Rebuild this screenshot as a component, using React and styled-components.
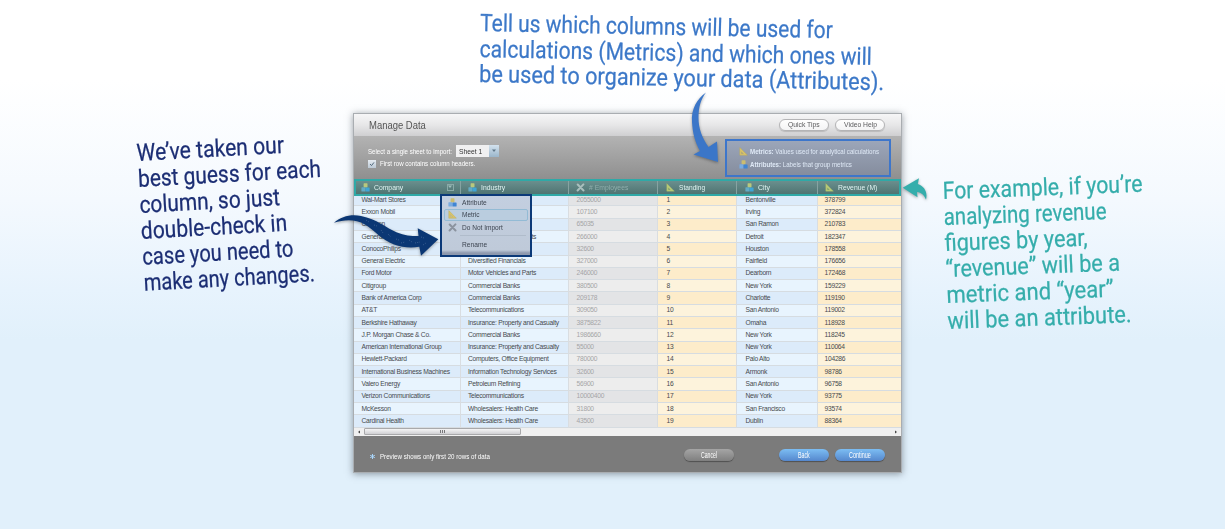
import React, { useLayoutEffect, useRef } from "react";
import styled, { createGlobalStyle } from "styled-components";

const GlobalStyle = createGlobalStyle`
  body {
    margin: 0;
    background: #e2f1fb;
    font-family: "Liberation Sans", Arial, sans-serif;
  }
  * { box-sizing: border-box; }
`;

const Page = styled.main`
  position: relative;
  width: 1225px;
  height: 529px;
  overflow: hidden;
  padding: 113px 0 0 353px;
  background: linear-gradient(#fff 0, #fff 80px, #f4f9fe 200px, #e7f3fd 290px, #e1f0fb 340px, #e1f0fb 100%);
`;

/* ---------- text squeezed to a given width ---------- */

const FitBox = styled.span`
  display: inline-block;
  flex: none;
  width: ${(p) => p.$w}px;
  white-space: pre;
`;
const FitText = styled.span`
  display: inline-block;
  transform-origin: 0 50%;
`;
function Fit({ w, children }) {
  const ref = useRef(null);
  useLayoutEffect(() => {
    const el = ref.current;
    el.style.transform = `scaleX(${w / el.offsetWidth})`;
  }, [w, children]);
  return (
    <FitBox $w={w}>
      <FitText ref={ref}>{children}</FitText>
    </FitBox>
  );
}

/* ---------- dialog ---------- */

const Dialog = styled.section`
  display: flex;
  flex-direction: column;
  width: 549px;
  height: 360px;
  border: 1px solid #a9adb1;
  background: #7b7b7b;
  box-shadow: 0 1px 7px rgba(50, 60, 70, 0.5);
`;
const TitleBar = styled.header`
  display: flex;
  align-items: center;
  gap: 6px;
  height: 22px;
  padding: 0 16px 0 14.5px;
  color: #555;
  font-size: 10.8px;
  background: linear-gradient(#f6f6f7, #e7e7e8 50%, #cfcfd1);
`;
const Spacer = styled.div`
  flex: 1;
`;
const PillButton = styled.button`
  display: flex;
  align-items: center;
  justify-content: center;
  width: 50px;
  height: 12px;
  padding: 0;
  border: 1px solid ${(p) => (p.$tone === "light" ? "#b4b4b6" : "transparent")};
  border-radius: 6px;
  font: ${(p) => (p.$tone === "light" ? '7.2px "Liberation Sans", sans-serif' : '8.4px "Liberation Sans", sans-serif')};
  color: ${(p) => (p.$tone === "light" ? "#5a5a5c" : "#fff")};
  background: ${(p) =>
    ({
      light: "linear-gradient(#fff, #f3f3f4)",
      grey: "linear-gradient(#a5a5a5, #7f7f7f)",
      blue: "linear-gradient(#7cbdf3, #5587cd)",
    })[p.$tone]};
  background-clip: border-box;
  background-origin: border-box;
  box-shadow: 0 1px 1px rgba(0, 0, 0, ${(p) => (p.$tone === "light" ? 0.15 : 0.35)});
`;
const Toolbar = styled.div`
  display: flex;
  justify-content: space-between;
  height: 43px;
  padding: 3px 10px 0 13.5px;
  background: linear-gradient(#b3b3b3, #8f8f8f);
`;
const Options = styled.div`
  display: flex;
  flex-direction: column;
  padding-top: 6px;
  color: #fff;
  font-size: 6.8px;
`;
const Option = styled.label`
  display: flex;
  align-items: center;
  gap: ${(p) => p.$gap}px;
  height: 12.5px;
`;
const Select = styled.div`
  display: flex;
  align-items: center;
  justify-content: space-between;
  width: 43px;
  height: 12px;
  padding-left: 3px;
  color: #333;
  font-size: 7.6px;
  background: #f0f0f1;
`;
const SelectArrow = styled.span`
  display: grid;
  place-items: center;
  width: 10px;
  height: 12px;
  background: linear-gradient(#d3e2ee, #9bb6cb);
`;
const CheckBox = styled.span`
  display: grid;
  place-items: center;
  width: 8px;
  height: 8px;
  background: linear-gradient(#e5ebf1, #bcc9d5);
`;
const Legend = styled.div`
  display: flex;
  flex-direction: column;
  justify-content: center;
  gap: 3px;
  width: 166px;
  height: 38px;
  padding: 0 0 0 12px;
  border: 2px solid #3d76cb;
  background: linear-gradient(#9ca6b9, #858d9e);
  color: #dfe9f6;
  font-size: 6.7px;
`;
const LegendRow = styled.div`
  display: flex;
  align-items: center;
  gap: 2px;
  height: 9.5px;
`;

const columns = "105.5px 108px 89px 79px 81px 84.5px";
const HeaderRow = styled.div`
  display: grid;
  grid-template-columns: 103.5px 108px 89px 79px 81px 82.5px;
  height: 17px;
  border: 2px solid #2fa9a7;
  background: linear-gradient(#6a8f8e, #4f7472);
`;
const HeaderCell = styled.div`
  display: flex;
  align-items: center;
  gap: 4px;
  padding-left: ${(p) => p.$pad}px;
  border-left: ${(p) => (p.$first ? "0" : "1px solid #86a3a2")};
  color: ${(p) => (p.$dim ? "#8fadab" : "#e0f3f1")};
  font-size: 7.5px;
`;
const Dropdown = styled.span`
  display: grid;
  place-items: center;
  width: 7px;
  height: 7px;
  margin-left: auto;
  margin-right: 6px;
  border: 1px solid #8aaaa8;
`;
const Body = styled.div`
  height: 233px;
  display: flex;
  flex-direction: column;
  justify-content: flex-end;
  overflow: hidden;
`;
const Row = styled.div`
  display: grid;
  grid-template-columns: ${columns};
  flex: none;
  height: 12.31px;
`;
const tones = {
  a: ["#dcebfa", "#e8f4fe"],
  n: ["#e3e4e6", "#ededed"],
  m: ["#fdecca", "#fdf3dc"],
};
const Cell = styled.div`
  padding: 0.6px 0 0 ${(p) => p.$pad}px;
  border-bottom: 1px solid #d6dce1;
  border-left: ${(p) => (p.$first ? "0" : "1px solid #d9dde1")};
  background: ${(p) => tones[p.$kind][p.$odd]};
  color: ${(p) => (p.$kind === "n" ? "#a5a5a6" : "#474a4e")};
  font-size: 6.7px;
  letter-spacing: -0.26px;
  line-height: 10.6px;
  white-space: nowrap;
`;
const ScrollTrack = styled.div`
  display: flex;
  align-items: center;
  justify-content: space-between;
  height: 8.5px;
  padding: 0 3px;
  background: #f0f0f0;
`;
const ScrollThumb = styled.div`
  display: flex;
  align-items: center;
  justify-content: center;
  gap: 1px;
  width: 157px;
  height: 7px;
  margin: 0 auto 0 3px;
  border: 1px solid #a9a9ab;
  border-radius: 1px;
  background: linear-gradient(#f4f4f5, #d0d0d3);
`;
const Grip = styled.i`
  width: 1px;
  height: 3px;
  background: #77777a;
`;
const Footer = styled.footer`
  display: flex;
  align-items: center;
  height: 36px;
  padding: 5px 16px 0 15px;
  color: #fff;
  font-size: 6.8px;
`;
const Star = styled.svg`
  width: 7px;
  height: 7px;
  margin-right: 4px;
`;
const ButtonGroup = styled.div`
  display: flex;
  gap: 6px;
  margin: -3px 0 0 ${(p) => p.$ml || 0}px;
`;

/* ---------- column menu ---------- */

const Menu = styled.div`
  position: absolute;
  left: 440px;
  top: 194px;
  width: 92px;
  height: 63px;
  padding: 0 2px;
  border: 2px solid #0b3978;
  background: linear-gradient(#c3cfe0, #bfcad9 54px, #8e99ae 57px, #8e99ae);
  color: #3c4450;
  font-size: 7.2px;
`;
const MenuItem = styled.div`
  display: flex;
  align-items: center;
  height: 12.5px;
  padding-left: 3px;
  border: 1px solid ${(p) => (p.$active ? "#93bbd5" : "transparent")};
  border-radius: 2px;
  background: ${(p) => (p.$active ? "#bacddf" : "none")};
`;
const MenuIcon = styled.span`
  display: flex;
  width: 14px;
`;
const MenuRule = styled.div`
  height: 1px;
  margin: 1.5px 2px 2px 16px;
  background: #b0bccb;
`;

/* ---------- handwritten notes ---------- */

const Note = styled.div`
  position: absolute;
  left: ${(p) => p.$x}px;
  top: ${(p) => p.$y}px;
  display: flex;
  flex-direction: column;
  color: ${(p) => p.$color};
  font: 400 24px/${(p) => p.$lh}px Roboto, sans-serif;
  -webkit-text-stroke: 0.25px ${(p) => p.$color};
  transform: rotate(${(p) => p.$angle}deg);
  transform-origin: 0 21px;
`;
const Arrows = styled.svg`
  position: absolute;
  left: 0;
  top: 0;
  pointer-events: none;
  filter: drop-shadow(0 1px 1.5px rgba(0, 0, 0, 0.35));
`;

/* ---------- icons ---------- */

const Cubes = ({ s = 9, muted }) => (
  <svg width={s} height={s} viewBox="0 0 9 9">
    <rect x="2.6" y="0.3" width="3.9" height="4.1" rx=".6" fill={muted ? "#b8c87e" : "#cbbd70"} />
    <rect x="0.4" y="4.2" width="4.1" height="4.3" rx=".6" fill={muted ? "#63aac4" : "#79abe0"} />
    <rect x="4.5" y="4.4" width="4.1" height="4.2" rx=".6" fill={muted ? "#3fa5d6" : "#3f85d4"} />
  </svg>
);
const Ruler = ({ s = 9, muted }) => (
  <svg width={s} height={s} viewBox="0 0 9 9">
    <path
      d="M.8.6v7.6h7.6zM2.4 4.7l2 2h-2z"
      fill={muted ? "#b9cb79" : "#d8c36b"}
      stroke={muted ? "#a4b968" : "#bda850"}
      strokeWidth=".4"
      fillRule="evenodd"
    />
  </svg>
);
const Cross = ({ s = 9, color }) => (
  <svg width={s} height={s} viewBox="0 0 9 9">
    <path d="M1.7 1.5l5.8 6M7.4 1.4L1.6 7.5" stroke={color} strokeWidth="2" strokeLinecap="round" />
  </svg>
);
const Caret = ({ color = "#5f7787", dir = "M0 0h4L2 2.5z" }) => (
  <svg width="4" height="4" viewBox="0 -.5 4 4">
    <path d={dir} fill={color} />
  </svg>
);

/* ---------- data ---------- */

/* industries of the rows covered by the open column menu are left empty */
const rows = [
  ["Wal-Mart Stores", "", "2055000", "1", "Bentonville", "378799"],
  ["Exxon Mobil", "", "107100", "2", "Irving", "372824"],
  ["Chevron", "", "65035", "3", "San Ramon", "210783"],
  ["General Motors", "Motor Vehicles and Parts", "266000", "4", "Detroit", "182347"],
  ["ConocoPhilips", "", "32600", "5", "Houston", "178558"],
  ["General Electric", "Diversified Financials", "327000", "6", "Fairfield", "176656"],
  ["Ford Motor", "Motor Vehicles and Parts", "246000", "7", "Dearborn", "172468"],
  ["Citigroup", "Commercial Banks", "380500", "8", "New York", "159229"],
  ["Bank of America Corp", "Commercial Banks", "209178", "9", "Charlotte", "119190"],
  ["AT&T", "Telecommunications", "309050", "10", "San Antonio", "119002"],
  ["Berkshire Hathaway", "Insurance: Property and Casualty", "3875822", "11", "Omaha", "118928"],
  ["J.P. Morgan Chase & Co.", "Commercial Banks", "1986660", "12", "New York", "118245"],
  ["American International Group", "Insurance: Property and Casualty", "55000", "13", "New York", "110064"],
  ["Hewlett-Packard", "Computers, Office Equipment", "780000", "14", "Palo Alto", "104286"],
  ["International Business Machines", "Information Technology Services", "32600", "15", "Armonk", "98786"],
  ["Valero Energy", "Petroleum Refining", "56900", "16", "San Antonio", "96758"],
  ["Verizon Communications", "Telecommunications", "10000400", "17", "New York", "93775"],
  ["McKesson", "Wholesalers: Health Care", "31800", "18", "San Francisco", "93574"],
  ["Cardinal Health", "Wholesalers: Health Care", "43500", "19", "Dublin", "88364"],
];
const kinds = ["a", "a", "n", "m", "a", "m"];
const pads = [7.5, 7.5, 8, 9, 9, 7];

const headers = [
  { label: "Company", w: 29, kind: "a", pad: 5 },
  { label: "Industry", w: 24.5, kind: "a", pad: 7 },
  { label: "# Employees", w: 39, kind: "n", pad: 7 },
  { label: "Standing", w: 26.5, kind: "m", pad: 8.5 },
  { label: "City", w: 12, kind: "a", pad: 8 },
  { label: "Revenue (M)", w: 39, kind: "m", pad: 7 },
];

const notes = [
  {
    x: 480, y: 10.5, lh: 25.6, angle: 1.15, color: "#3c78c8",
    lines: [
      ["Tell us which columns will be used for", 353],
      ["calculations (Metrics) and which ones will", 392],
      ["be used to organize your data (Attributes).", 405],
    ],
  },
  {
    x: 137, y: 140, lh: 26, angle: -3.2, color: "#1c2e74",
    lines: [
      ["We’ve taken our", 148],
      ["best guess for each", 183],
      ["column, so just", 141],
      ["double-check in", 146],
      ["case you need to", 151],
      ["make any changes.", 171],
    ],
  },
  {
    x: 943, y: 177.5, lh: 26.1, angle: -2.1, color: "#35adab",
    lines: [
      ["For example, if you’re", 200],
      ["analyzing revenue", 163],
      ["figures by year,", 143],
      ["“revenue” will be a", 174],
      ["metric and “year”", 167],
      ["will be an attribute.", 184],
    ],
  },
];

function HeaderIcon({ kind }) {
  if (kind === "a") return <Cubes muted />;
  if (kind === "m") return <Ruler muted />;
  return <Cross color="#a9bfbd" />;
}

export default function App() {
  return (
    <Page>
      <GlobalStyle />
      <Dialog>
        <TitleBar>
          <Fit w={57}>Manage Data</Fit>
          <Spacer />
          <PillButton $tone="light"><Fit w={32}>Quick Tips</Fit></PillButton>
          <PillButton $tone="light"><Fit w={33}>Video Help</Fit></PillButton>
        </TitleBar>
        <Toolbar>
          <Options>
            <Option $gap={4}>
              <Fit w={84}>Select a single sheet to import:</Fit>
              <Select>
                <Fit w={23}>Sheet 1</Fit>
                <SelectArrow><Caret /></SelectArrow>
              </Select>
            </Option>
            <Option $gap={4.5}>
              <CheckBox>
                <svg width="6" height="6" viewBox="0 0 6 6">
                  <path d="M1 3l1.5 1.6L5 1.4" fill="none" stroke="#52697c" />
                </svg>
              </CheckBox>
              <Fit w={95}>First row contains column headers.</Fit>
            </Option>
          </Options>
          <Legend>
            <LegendRow>
              <Ruler />
              <Fit w={129}><b>Metrics:</b> Values used for analytical calculations</Fit>
            </LegendRow>
            <LegendRow>
              <Cubes />
              <Fit w={102}><b>Attributes:</b> Labels that group metrics</Fit>
            </LegendRow>
          </Legend>
        </Toolbar>
        <HeaderRow>
          {headers.map((h, i) => (
            <HeaderCell key={h.label} $pad={h.pad} $first={i === 0} $dim={h.kind === "n"}>
              <HeaderIcon kind={h.kind} />
              <Fit w={h.w}>{h.label}</Fit>
              {i === 0 && <Dropdown><Caret color="#9fbfbc" /></Dropdown>}
            </HeaderCell>
          ))}
        </HeaderRow>
        <Body>
          {rows.map((r, ri) => (
            <Row key={r[0]}>
              {r.map((c, ci) => (
                <Cell key={ci} $kind={kinds[ci]} $odd={ri % 2} $pad={pads[ci]} $first={ci === 0}>{c}</Cell>
              ))}
            </Row>
          ))}
        </Body>
        <ScrollTrack>
          <Caret color="#444" dir="M3 0v3L1 1.5z" />
          <ScrollThumb><Grip /><Grip /><Grip /></ScrollThumb>
          <Caret color="#444" dir="M1 0v3l2-1.5z" />
        </ScrollTrack>
        <Footer>
          <Star viewBox="0 0 7 7">
            <path d="M3.5 1v5M1.2 2.3l4.6 2.4M5.8 2.3L1.2 4.7" stroke="#a9d5fa" strokeWidth="1" fill="none" />
          </Star>
          <Fit w={110}>Preview shows only first 20 rows of data</Fit>
          <Spacer />
          <ButtonGroup>
            <PillButton $tone="grey"><Fit w={16}>Cancel</Fit></PillButton>
          </ButtonGroup>
          <ButtonGroup $ml={45}>
            <PillButton $tone="blue"><Fit w={12}>Back</Fit></PillButton>
            <PillButton $tone="blue"><Fit w={22}>Continue</Fit></PillButton>
          </ButtonGroup>
        </Footer>
      </Dialog>

      <Menu>
        <MenuItem><MenuIcon><Cubes /></MenuIcon><Fit w={25}>Attribute</Fit></MenuItem>
        <MenuItem $active><MenuIcon><Ruler /></MenuIcon><Fit w={18}>Metric</Fit></MenuItem>
        <MenuItem><MenuIcon><Cross color="#8b939f" /></MenuIcon><Fit w={41}>Do Not Import</Fit></MenuItem>
        <MenuRule />
        <MenuItem><MenuIcon /><Fit w={25}>Rename</Fit></MenuItem>
      </Menu>

      {notes.map((n) => (
        <Note key={n.x} $x={n.x} $y={n.y} $lh={n.lh} $angle={n.angle} $color={n.color}>
          {n.lines.map(([t, w]) => <Fit key={t} w={w}>{t}</Fit>)}
        </Note>
      ))}

      <Arrows width="1225" height="529" viewBox="0 0 1225 529">
        <path
          fill="#3b76c8"
          d="M706 92.5C697 99 691 109 692 122C692.6 133 695 142 700 151L693.5 154.5L718 162L717 141.5L708.5 147C702 138 698.5 128 698.5 118C698.5 107 701 99 706 92.5Z"
        />
        <path
          fill="#0b3774"
          d="M334 222.7C341 216.5 351 214 361 216C377 219 386 228 397 232.5C404 235.5 411 236 418.5 236L417.7 228.3L438.3 239.3L421 255.7L419.3 246.8C411 248 402 247.5 394 244.5C382 240 374 230 365 224.5C355 218.5 344 219.5 334 222.7Z"
        />
        <path
          d="M366 220l3 2M374 225l3 1M381 230l2 3M388 234l3 3M396 239l3 1M401 243l4-1M409 240l3 2M415 243l5-1M421 237l3 1M423 245l3-2"
          stroke="#5d7ba5"
          strokeWidth=".6"
          strokeDasharray="1 1.3"
        />
        <path
          fill="#35aeac"
          d="M902.7 187.7L919 178.3L917.8 184C924 186 928 192 926 199.7C924 195 921.5 192.5 917 192L917.5 197.3Z"
        />
      </Arrows>
    </Page>
  );
}
